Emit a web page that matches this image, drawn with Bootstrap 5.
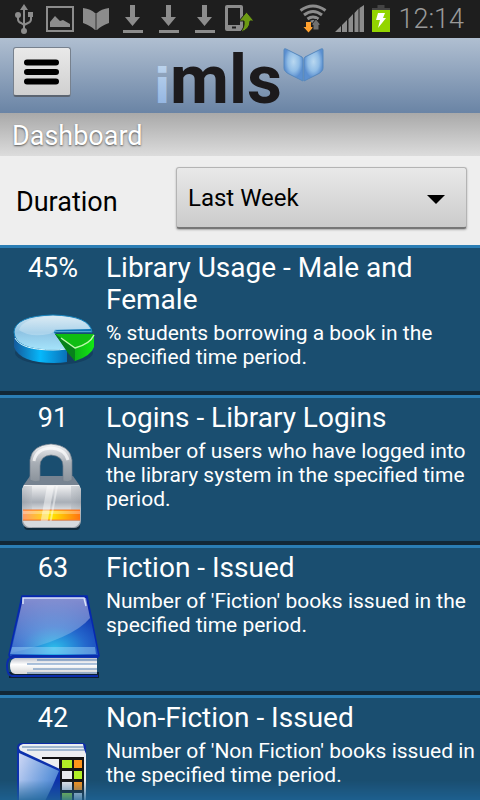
<!DOCTYPE html>
<html lang="en">
<head>
<meta charset="utf-8">
<meta name="viewport" content="width=device-width, initial-scale=1">
<title>iMLS Dashboard</title>
<link href="https://cdn.jsdelivr.net/npm/bootstrap@5.3.0/dist/css/bootstrap.min.css" rel="stylesheet">
<style>
  body { font-family: Roboto, "Noto Sans", sans-serif; font-size: 27px; line-height: 32px; color: #000; background: #1a4e70; }
  svg { display: block; flex: none; }
  .status-bar { height: 38px; background: #1e1e1e; color: #8c8c8c; padding: 0 16px 0 6px; }
  .clock { font-weight: 300; color: #999; }
  .app-header { height: 75px; padding: 0 13px; background: linear-gradient(#b0bfd1, #6a84a5); }
  .brand { overflow: visible; }
  .menu-btn { width: 58px; height: 50px; padding: 0; margin-bottom: 7px; border: 1px solid #77818e; border-bottom: 2px solid #5c6571; border-radius: 3px; background: linear-gradient(#e9e9e9, #d0d0d0); }
  .page-title { height: 43px; padding: 7px 12px 0; margin: 0; font-size: 27px; line-height: 32px; font-weight: 400; color: #fff; background: linear-gradient(#a9a9a9, #dcdcdc); text-shadow: 0 1px 2px #555; }
  .filter-bar { height: 89px; padding: 11px 13px 16px 16px; background: #eee; }
  .filter-bar label { width: 160px; padding-top: 7px; }
  .period { height: 62px; padding: 0 48px 0 11px; font-size: 24px; line-height: 28px; color: #000; border: 1px solid #b4b4b4; border-bottom: 2px solid #777; border-radius: 3px; box-shadow: 0 1px 2px #aaa;
    background: url("data:image/svg+xml,%3Csvg xmlns='http://www.w3.org/2000/svg' viewBox='0 0 18 9'%3E%3Cpath d='M0 0h18L9 9z'/%3E%3C/svg%3E") no-repeat right 21px top 27px / 18px 9px, linear-gradient(#e9e9e9, #cbcbcb); }
  .stats { min-height: 0; overflow-y: auto; scrollbar-width: none; }
  .stats::-webkit-scrollbar { display: none; }
  .stat { min-height: 150px; padding-top: 4px; color: #fff; background: #1a4e70; border-top: 3px solid #2b7db4; border-bottom: 4px solid #122838; }
  .stat-side { width: 106px; flex: none; }
  .stat-side svg { margin-top: 7px; }
  .stat h2 { font-size: 28px; line-height: 32px; font-weight: 400; margin: 0 0 5px; }
  .stat p { font-size: 21px; line-height: 24px; margin: 0; }
  .fade-edge { height: 20px; pointer-events: none; background: linear-gradient(#1f649600, #1f6496cc); }
</style>
<script src="https://cdn.jsdelivr.net/npm/bootstrap@5.3.0/dist/js/bootstrap.bundle.min.js"></script>
</head>
<body>
<div class="d-flex flex-column vh-100 position-relative overflow-hidden">
  <div class="status-bar d-flex align-items-center flex-shrink-0">
    <svg width="36" height="38" fill="#8c8c8c" stroke="#8c8c8c"><path d="M18 4l4 6h-8z" stroke="none"/><path d="M18 8v23M12 15v4q0 3 3 4l3 2M25 15v4q0 3-3 4l-4 2" fill="none" stroke-width="2"/><circle cx="18" cy="31" r="3" stroke="none"/><circle cx="12" cy="15" r="3" stroke="none"/><path d="M22 12h5v5h-5z" stroke="none"/></svg>
    <svg width="36" height="38" fill="#8c8c8c"><path d="M5 7h26v24H5z" fill="none" stroke="#8c8c8c" stroke-width="2"/><path d="M8 27v-5l5-6 5 5 3-1 7 4v3z"/></svg>
    <svg width="36" height="38" fill="#8c8c8c"><path d="M5 8q8 1 12 5v17q-4-4-12-7zM31 8q-8 1-12 5v17q4-4 12-7z"/><path d="M17 13h2v17h-2z" fill="#5f5f5f"/></svg>
    <svg width="36" height="38" fill="#8c8c8c"><path d="M16 5h5v12h5l-7.500 9-7.500-9h5zM9 30h20v3H9z"/></svg>
    <svg width="36" height="38" fill="#8c8c8c"><path d="M16 5h5v12h5l-7.500 9-7.500-9h5zM9 30h20v3H9z"/></svg>
    <svg width="36" height="38" fill="#8c8c8c"><path d="M16 5h5v12h5l-7.500 9-7.500-9h5zM9 30h20v3H9z"/></svg>
    <svg width="36" height="38"><path fill="#8c8c8c" fill-rule="evenodd" d="M5 5h14q2 0 2 2v22q0 2-2 2H5q-2 0-2-2V7q0-2 2-2zm1 3v17h12V8zm4 18.500v2h4v-2z"/><path d="M24.500 12l7.500 9h-4q0 9-10 11 5-4 4-11h-5z" fill="#6c9a12" stroke="#1e1e1e"/></svg>
    <svg class="ms-auto" width="28" height="38" fill="none" stroke="#8c8c8c" stroke-width="3"><path d="M1.500 10.500q12.500-9 25 0M5 15q9-7 18 0M8.500 19q5.500-4 11 0"/><path d="M11 21q3-2 6 0l-3 3z" fill="#8c8c8c" stroke="none"/><path d="M7 22h5v5h2.500L9.500 32.500 4.500 27H7z" fill="#ffa02e" stroke="none"/><path d="M18 30h-4v-5h-2l5-6 5 6h-2v5z" fill="#707070" stroke="#1e1e1e" stroke-width="1"/></svg>
    <svg class="ms-2" width="29" height="38" fill="#8c8c8c"><path d="M0 32l6-6v6zM7 25l5-5v12H7zM13.500 19l4.500-5v18h-4.500zM19.500 13l4-4.500V32h-4zM24.500 8l4.500-3v27h-4.500z"/></svg>
    <svg class="ms-2" width="18" height="38"><path fill="#444" d="M5.500 5h7v3H18v3H0V8h5.500z"/><path fill="#93d500" d="M0 10h18v22H0z"/><path fill="#fff" d="M6 13h7l-2 5h3L6 28l2-8H4z"/></svg>
    <span class="clock ms-2">12:14</span>
  </div>

  <header class="app-header d-flex align-items-center flex-shrink-0">
    <div class="flex-fill w-25"><button class="menu-btn d-flex align-items-center justify-content-center" type="button" aria-label="Menu">
      <svg width="36" height="28"><path d="M3 4.500h29M3 14h29M3 23.500h29" stroke="#000" stroke-width="6" stroke-linecap="round"/></svg>
    </button></div>
    <svg class="brand" width="170" height="60" role="img" aria-label="imls">
      <defs>
        <linearGradient id="logoI" x2="0" y2="1"><stop stop-color="#c3d9ef"/><stop offset="1" stop-color="#8aaedf"/></linearGradient>
        <radialGradient id="logoBook" cy=".4"><stop stop-color="#b9d8f0"/><stop offset=".6" stop-color="#91bde6"/><stop offset="1" stop-color="#5b8fd0"/></radialGradient>
      </defs>
      <text x="-1" y="57" font-family="DejaVu Sans" font-weight="700" font-size="48" fill="url(#logoI)">i</text>
      <text x="15" y="57" font-family="Roboto" font-weight="700" font-size="68" fill="#1c1a1c">mls</text>
      <path d="M129 4q0-2 2-1l16 8q1 1 1 3v21l-12-6q-7-3-7-7z" fill="url(#logoBook)" stroke="#5688bd"/>
      <path d="M168 4q0-2-2-1l-16 8q-1 1-1 3v21l12-6q7-3 7-7z" fill="url(#logoBook)" stroke="#5688bd"/>
    </svg>
    <div class="flex-fill w-25"></div>
  </header>

  <h1 class="page-title flex-shrink-0">Dashboard</h1>

  <div class="filter-bar d-flex align-items-center flex-shrink-0">
    <label class="flex-shrink-0" for="period">Duration</label>
    <select class="form-select period" id="period"><option>Last Week</option></select>
  </div>

  <main class="stats flex-fill">
    <article class="stat d-flex">
      <div class="stat-side d-flex flex-column align-items-center"><span>45%</span>
        <svg width="96" height="96" viewBox="0 0 96 96">
          <defs>
            <linearGradient id="pieTop" x2="0" y2="1"><stop stop-color="#d3e6f1"/><stop offset=".5" stop-color="#8fc4e4"/><stop offset="1" stop-color="#a5e4fb"/></linearGradient>
            <linearGradient id="pieSide"><stop stop-color="#145a9c"/><stop offset=".5" stop-color="#06b8fb"/><stop offset="1" stop-color="#0a70b8"/></linearGradient>
            <linearGradient id="pieGreen"><stop stop-color="#0a7c1c"/><stop offset="1" stop-color="#12e813"/></linearGradient>
          </defs>
          <ellipse cx="49" cy="62" rx="39" ry="12" fill="#0f3150" opacity=".5"/>
          <path d="M9 41v15q6 16 40 16 7 0 13-1V58z" fill="url(#pieSide)"/>
          <path d="M49 41h38Q85 25 48 24 10 25 9 41q1 18 39 18 8 0 14-1z" fill="url(#pieTop)" stroke="#1583bd"/>
          <path d="M14 39Q17 27 48 25q32 1 37 13H50q-1 4-6 5-19 4-30-4z" fill="#fff" opacity=".25"/>
          <path d="M49 40h37v-2l-34 1z" fill="#0874b4"/>
          <path d="M10 47q6 12 38 12 7 0 13-1" fill="none" stroke="#d8f8ff"/>
          <path d="M50 43h39v13q-3 9-19 14l-7-9z" fill="url(#pieGreen)"/>
          <path d="M50 43h39q-1 9-19 14z" fill="#0fbd13"/>
          <path d="M50 43l20 14v13l-7-8z" fill="#07811b"/>
          <path d="M56 47l14 10q15-4 19-13" fill="none" stroke="#bdf9ab" stroke-width="1.500"/>
        </svg>
      </div>
      <div><h2>Library Usage - Male and Female</h2><p>% students borrowing a book in the specified time period.</p></div>
    </article>

    <article class="stat d-flex">
      <div class="stat-side d-flex flex-column align-items-center"><span>91</span>
        <svg width="96" height="96" viewBox="0 0 96 96">
          <defs>
            <linearGradient id="steel"><stop stop-color="#8b929b"/><stop offset=".3" stop-color="#d5d8dc"/><stop offset=".7" stop-color="#c3c8cf"/><stop offset="1" stop-color="#8e969f"/></linearGradient>
            <linearGradient id="steelV" x2="0" y2="1"><stop stop-color="#f4f4f5"/><stop offset=".4" stop-color="#a9afb7"/><stop offset=".55" stop-color="#d3d6da"/><stop offset="1" stop-color="#999fa7"/></linearGradient>
            <linearGradient id="band"><stop stop-color="#ff9b68"/><stop offset=".5" stop-color="#ffe600"/><stop offset="1" stop-color="#ff7310"/></linearGradient>
            <linearGradient id="arc" x2="0" y2="1"><stop stop-color="#f5f5f6"/><stop offset=".5" stop-color="#a8aeb5"/><stop offset="1" stop-color="#8a929b"/></linearGradient>
          </defs>
          <path d="M25 35h43l7 10v10H18V45z" fill="#778391"/>
          <path d="M25 39V19Q27 4 46 3q19 1 21 16v20q-4 3-9 1V25q0-10-12-11-11 1-11 11v15q-5 2-10-1z" fill="url(#arc)" stroke="#727f8c" stroke-width=".7"/>
          <path d="M29 20Q31 8 46 7q14 1 17 12" fill="none" stroke="#fff" stroke-width="3" opacity=".7"/>
          <rect x="19" y="81" width="56" height="8" rx="4" fill="#102b3d"/>
          <path d="M19 44h55l2 4v32q-1 7-7 7H24q-6 0-7-7V48z" fill="url(#steelV)"/>
          <path d="M19 45h8v42h-3q-6 0-7-7V48zM74 45h-8v42h3q6 0 7-7V48z" fill="url(#steel)" opacity=".4"/>
          <path d="M18 69h57v10H18z" fill="url(#band)"/><path d="M18 69h57M18 79h57" stroke="#ff7b2b"/><path d="M18 70h57v3H18z" fill="#fff" opacity=".3"/>
          <path d="M42 45h7l-7 39h-7zM51 45h2l-7 39h-2z" fill="#fff" opacity=".45"/>
          <path d="M18 80h57q-2 6-7 6H25q-5 0-7-6z" fill="#d7dade"/>
        </svg>
      </div>
      <div><h2>Logins - Library Logins</h2><p>Number of users who have logged into the library system in the specified time period.</p></div>
    </article>

    <article class="stat d-flex">
      <div class="stat-side d-flex flex-column align-items-center"><span>63</span>
        <svg width="96" height="96" viewBox="0 0 96 96">
          <defs>
            <radialGradient id="cover" cx=".5" cy=".85" r=".8"><stop stop-color="#2cc0ec"/><stop offset=".45" stop-color="#2467cc"/><stop offset="1" stop-color="#0a21a4"/></radialGradient>
            <linearGradient id="gloss" x2="0" y2="1"><stop stop-color="#fff" stop-opacity=".5"/><stop offset="1" stop-color="#fff" stop-opacity=".1"/></linearGradient>
            <linearGradient id="paper" x2="0" y2="1"><stop stop-color="#bfc2cc"/><stop offset=".4" stop-color="#fff"/><stop offset="1" stop-color="#d5d5d5"/></linearGradient>
          </defs>
          <path d="M4 81h90v6H4z" fill="#0c2032"/>
          <path d="M17 5h65l12 60-2 2H5l-1-3z" fill="url(#cover)" stroke="#0628b0" stroke-width="1.500"/>
          <path d="M18 7h63l4 20Q68 48 6 62z" fill="url(#gloss)"/>
          <path d="M18 13V7h61l2 8" fill="none" stroke="#dbe5fa" stroke-width="1.500"/>
          <path d="M7 56h83l1 7H5z" fill="#a3dbfa" opacity=".45"/>
          <path d="M94 65H8q-6 2-6 10 0 9 5 10h86" fill="none" stroke="#0a2cac" stroke-width="2"/>
          <path d="M92 67H10q-5 1-5 8 0 7 5 8h82z" fill="url(#paper)"/>
          <path d="M32 69h60M22 73h70M28 78h64M22 82h70" stroke="#2661a5" stroke-width="1" opacity=".75"/>
        </svg>
      </div>
      <div><h2>Fiction - Issued</h2><p>Number of 'Fiction' books issued in the specified time period.</p></div>
    </article>

    <article class="stat d-flex">
      <div class="stat-side d-flex flex-column align-items-center"><span>42</span>
        <svg width="96" height="96" viewBox="0 0 96 96">
          <defs><linearGradient id="flap" y2="1"><stop stop-color="#cfd8f5"/><stop offset=".5" stop-color="#6699dc"/><stop offset="1" stop-color="#1546b5"/></linearGradient></defs>
          <path d="M12 7q0-5 5-5h60q4 0 4 4v80H12z" fill="#0d2ca8"/>
          <path d="M14 7q0-3 4-4h60l1 5 2 5v73H50z" fill="#eceef0"/>
          <path d="M17 6h62M22 9h58" stroke="#557fae"/><path d="M37 17h42" stroke="#111" stroke-width="2"/>
          <path d="M54 17h25v69H54z" fill="#151515"/>
          <path d="M57 19h10v8H57zM69 30h8v8h-8zM57 52h10v8H57z" fill="#b1ef25"/><path d="M69 19h8v8h-8zM69 41h8v8h-8z" fill="#ff9519"/><path d="M57 30h10v8H57zM57 41h10v8H57zM69 52h8v8h-8z" fill="#e8eaec"/>
          <path d="M12 8l43 20v58H12z" fill="#0d31ac"/>
          <path d="M14 12l40 18Q48 45 40 60L14 98z" fill="url(#flap)"/>
        </svg>
      </div>
      <div><h2>Non-Fiction - Issued</h2><p>Number of 'Non Fiction' books issued in the specified time period.</p></div>
    </article>
  </main>
  <div class="fade-edge position-absolute bottom-0 start-0 end-0"></div>
</div>
</body>
</html>
